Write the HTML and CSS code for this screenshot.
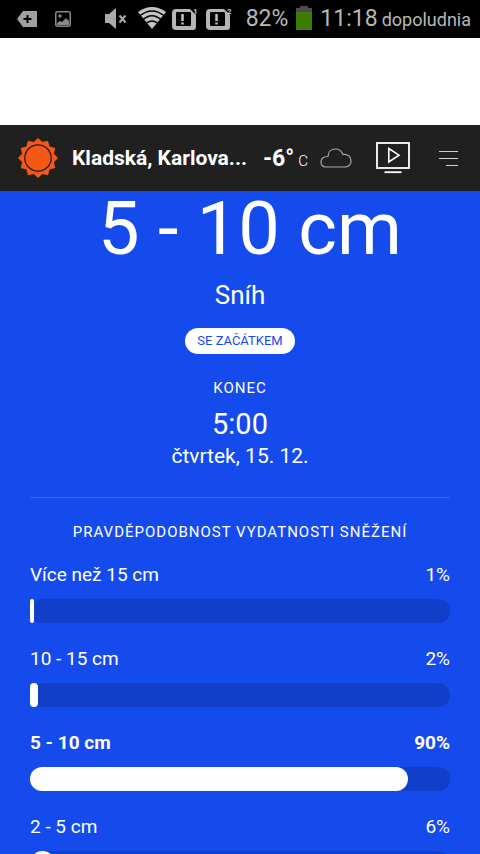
FILE: index.html
```html
<!DOCTYPE html>
<html lang="cs">
<head>
<meta charset="utf-8">
<meta name="viewport" content="width=device-width, initial-scale=1">
<title>Kladská – Sníh</title>
<link rel="stylesheet" href="styles.css">
</head>
<body>
<div class="screen">
  <div class="status">
    <div class="status-left">
      <svg width="20" height="18" viewBox="0 0 20 18"><path d="M6 1h14v16H6L0 9z" fill="#a0a0a0"/><path d="M10.500 5v8M6.500 9h8" stroke="#000" stroke-width="2"/></svg>
      <svg width="16" height="16" viewBox="0 0 16 16"><rect x=".75" y=".75" width="14.5" height="14.5" rx="2" fill="none" stroke="#8a8a8a" stroke-width="1.5"/><circle cx="5" cy="5" r="1.7" fill="#8a8a8a"/><path d="M2 14v-2l3-2 2 1 4-4 3 3v4z" fill="#8a8a8a"/></svg>
    </div>
    <div class="status-mid">
      <svg class="sound" width="22" height="22" viewBox="0 0 22 22"><path d="M0 6h4l7-6v21l-7-6H0z" fill="#aaa"/><path d="M14.500 7.500l6 7M20.500 7.500l-6 7" stroke="#aaa" stroke-width="2"/></svg>
      <svg width="28" height="24" viewBox="0 0 28 24"><path d="M0 5Q14-5 28 5L14 22z" fill="#c4c4c4"/><path d="M1 9.500Q14-1.500 27 9.500M4 13.500Q14 4 24 13.500M7 17.500Q14 10.500 21 17.500" fill="none" stroke="#000" stroke-width="1.500"/></svg>
      <svg width="28" height="28" viewBox="0 0 28 28"><path d="M4 4h14l6 6v12a3 3 0 0 1-3 3H4a4 4 0 0 1-4-4V8a4 4 0 0 1 4-4z" fill="#b5b5b5"/><rect x="4" y="7" width="15" height="14" rx="1"/><path d="M10.500 9v7M10.500 17.500v2" stroke="#c4c4c4" stroke-width="2.500"/><text x="21" y="9" class="sim">1</text></svg>
      <svg width="28" height="28" viewBox="0 0 28 28"><path d="M4 4h14l6 6v12a3 3 0 0 1-3 3H4a4 4 0 0 1-4-4V8a4 4 0 0 1 4-4z" fill="#b5b5b5"/><rect x="4" y="7" width="15" height="14" rx="1"/><path d="M10.500 9v7M10.500 17.500v2" stroke="#c4c4c4" stroke-width="2.500"/><text x="21" y="9" class="sim">2</text></svg>
    </div>
    <div class="status-right">
      <span class="clock">82%</span>
      <svg class="battery" width="16" height="24" viewBox="0 0 16 24"><path d="M0 2h4V0h8v2h4v4H0z" fill="#4c4c4c"/><path d="M0 6h16v18H0z" fill="#3f7d00"/></svg>
      <div class="now"><span class="clock">11:18</span><span class="daypart">dopoludnia</span></div>
    </div>
  </div>

  <header class="bar">
    <a class="logo" href="#" aria-label="Domů">
      <svg width="40" height="40" viewBox="-20 -20 40 40"><path fill="#f45814" d="M0-20L4.300-15.900 10-17.300 11.600-11.600 17.300-10 15.900-4.300 20 0 15.900 4.300 17.300 10 11.600 11.600 10 17.300 4.300 15.900 0 20-4.300 15.900-10 17.300-11.600 11.600-17.300 10-15.900 4.300-20 0-15.900-4.300-17.300-10-11.600-11.600-10-17.300-4.300-15.900z"/><circle r="13.200" fill="#f45814" stroke="#202020" stroke-width="1.300"/></svg>
    </a>
    <a class="place" href="#">Kladská, Karlova...</a>
    <div class="temp"><span class="degrees">-6°</span><span class="unit">C</span></div>
    <svg class="cloud" width="32" height="20" viewBox="0 0 32 20"><path d="M6 19h19.500a5.800 5.800 0 0 0 5.500-6.500c0-4-3.500-6.500-8-6C21.500 3 19 1 15.500 1 11 1 8 4 8 8.500 3.500 8.500 1 10.500 1 14c0 3 2 5 5 5z" fill="none" stroke="#a8a8a8" stroke-width="1.200"/></svg>
    <button class="icon video" type="button" aria-label="Video">
      <svg width="34" height="32" viewBox="0 0 34 32"><rect x="1" y="1" width="32" height="25" fill="none" stroke="#fff" stroke-width="1.800"/><path d="M12.800 6.500v13.500L23 13.200z" fill="none" stroke="#fff" stroke-width="1.600"/><path d="M8.500 30.200h17" stroke="#fff" stroke-width="1.800"/></svg>
    </button>
    <button class="icon menu" type="button" aria-label="Menu">
      <svg width="19" height="16" viewBox="0 0 19 16"><path d="M0 .5h19M0 7.500h19M7 14.500h12" stroke="#d0d0d0" stroke-width="1"/></svg>
    </button>
  </header>

  <main class="content">
    <h1>5 - 10 cm</h1>
    <p class="kind">Sníh</p>
    <p class="pill">SE ZAČÁTKEM</p>
    <h2>KONEC</h2>
    <p class="time">5:00</p>
    <p class="date">čtvrtek, 15. 12.</p>
    <section class="odds">
      <h2>PRAVDĚPODOBNOST VYDATNOSTI SNĚŽENÍ</h2>
      <div class="row"><span>Více než 15 cm</span><span>1%</span></div>
      <div class="track"><div class="fill" style="width:1%"></div></div>
      <div class="row"><span>10 - 15 cm</span><span>2%</span></div>
      <div class="track"><div class="fill" style="width:2%"></div></div>
      <div class="row strong"><span>5 - 10 cm</span><span>90%</span></div>
      <div class="track"><div class="fill" style="width:90%"></div></div>
      <div class="row"><span>2 - 5 cm</span><span>6%</span></div>
      <div class="track"><div class="fill" style="width:6%"></div></div>
    </section>
  </main>
</div>
</body>
</html>
```
FILE: styles.css
```css
* { box-sizing: border-box; }
body { margin: 0; font-family: Roboto, "Liberation Sans", sans-serif; color: #fff; }
h1, h2, p { margin: 0; font-weight: 400; }
a { color: inherit; text-decoration: none; }
svg { display: block; flex: none; }

.screen { height: 100vh; overflow: hidden; display: flex; flex-direction: column; background: #fff; }

.status { flex: none; height: 38px; padding: 0 9px 0 17px; background: #000; display: flex; align-items: center; }
.status-left { display: flex; align-items: center; gap: 18px; }
.status-mid { display: flex; align-items: center; gap: 6px; margin-left: 34px; }
.sound { margin-right: 5px; }
.status-right { display: flex; align-items: center; gap: 8px; margin-left: auto; }
.battery { margin-bottom: 2px; }
.sim { font-size: 8px; font-weight: 700; fill: #c4c4c4; }
.now { display: flex; align-items: baseline; gap: 4px; }
.clock { font-size: 23px; line-height: 28px; color: #b8b8b8; white-space: nowrap; }
.daypart { font-size: 18px; color: #b8b8b8; }

.bar { flex: none; height: 66px; margin-top: 87px; padding: 0 22px 0 18px; background: #202020; display: flex; align-items: center; }
.logo { flex: none; margin-right: 14px; }
.place { flex: 1; min-width: 0; margin-right: 12px; font-size: 21px; line-height: 28px; font-weight: 700; white-space: nowrap; }
.temp { display: flex; align-items: baseline; gap: 4px; }
.degrees { font-size: 23px; font-weight: 700; }
.unit { font-size: 15px; font-weight: 300; }
.cloud { margin-left: 12px; }
.icon { flex: none; padding: 0; border: 0; background: none; }
.video { margin: 0 29px 0 24px; }
.menu { padding-top: 2px; }

.content { flex: none; padding: 0 30px 30px; background: #154bec; text-align: center; }
h1 { padding-left: 20px; font-size: 74px; line-height: 76px; }
.kind { margin-top: 12px; font-size: 26px; line-height: 32px; }
.pill { width: fit-content; margin: 17px auto 0; padding: 0 12px; border-radius: 13px; background: #fff; color: #154bec; font-size: 13px; line-height: 26px; }
h2 { font-size: 15px; line-height: 20px; letter-spacing: 1px; }
.content > h2 { margin-top: 24px; }
.time { margin-top: 8px; font-size: 29px; line-height: 36px; }
.date { font-size: 21px; line-height: 28px; }
.odds { margin-top: 27px; padding-top: 24px; border-top: 1px solid #3b68ef; }
.row { display: flex; justify-content: space-between; margin-top: 24px; font-size: 19px; line-height: 24px; }
h2 + .row { margin-top: 21px; }
.strong { font-weight: 700; }
.track { height: 24px; margin-top: 12px; border-radius: 12px; background: #113fc8; }
.fill { height: 100%; border-radius: 12px; background: #fff; }
```
